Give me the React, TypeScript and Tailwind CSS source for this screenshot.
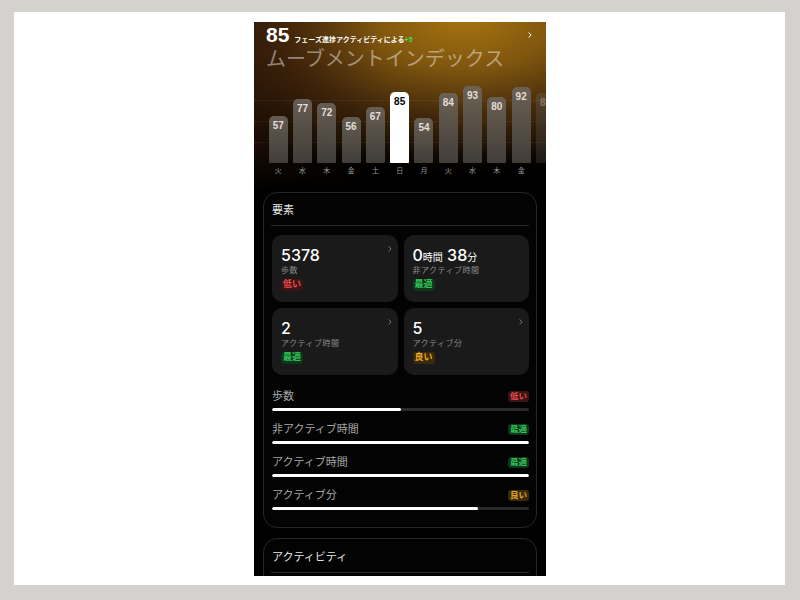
import React from "react";

const bars = [57, 77, 72, 56, 67, 85, 54, 84, 93, 80, 92, 84];
const days = ["火", "水", "木", "金", "土", "日", "月", "火", "水", "木", "金", ""];

type BadgeKind = "low" | "best" | "good";

function Badge({ kind, small }: { kind: BadgeKind; small?: boolean }) {
  const text = kind === "low" ? "低い" : kind === "best" ? "最適" : "良い";
  const cls =
    kind === "low"
      ? "bg-[#3b1515] text-[#e5484d]"
      : kind === "best"
      ? "bg-[#0e3619] text-[#32c45a]"
      : "bg-[#3a2a0a] text-[#e3a526]";
  return (
    <span
      className={`inline-flex items-center justify-center rounded-[3px] font-bold ${cls} ${
        small ? "h-[11px] px-[2px] text-[8.5px]" : "h-[12px] px-[2px] text-[9px]"
      }`}
    >
      {text}
    </span>
  );
}

function Chevron({ className }: { className?: string }) {
  return (
    <svg viewBox="0 0 6 10" className={className} fill="none" stroke="currentColor" strokeWidth="1.6" strokeLinecap="round" strokeLinejoin="round">
      <path d="M1.2 1.2 L4.8 5 L1.2 8.8" />
    </svg>
  );
}

function Tile({
  value,
  label,
  kind,
  chevron,
}: {
  value: React.ReactNode;
  label: string;
  kind: BadgeKind;
  chevron?: boolean;
}) {
  return (
    <div className="relative h-[67px] rounded-[10px] bg-[#1a1a1a] pl-[9px] pt-[10px]">
      {chevron && <Chevron className="absolute right-[6px] top-[11px] h-[6px] w-[4px] text-[#7a7a7a]" />}
      <div
        className="h-[20px] text-[16px] font-medium leading-[20px] text-white"
        style={{ fontFamily: 'Inter, "Noto Sans CJK JP", sans-serif' }}
      >
        {value}
      </div>
      <div className="mt-[1px] h-[10px] text-[8px] leading-[10px] tracking-[0.5px] text-[#8c8c8c]">{label}</div>
      <div className="mt-[3px] flex">
        <Badge kind={kind} />
      </div>
    </div>
  );
}

function Row({ label, kind, pct }: { label: string; kind: BadgeKind; pct: number }) {
  return (
    <div className="mb-[10px]">
      <div className="flex h-[16px] items-center justify-between">
        <span className="text-[11px] text-[#a6a6a6]">{label}</span>
        <Badge kind={kind} small />
      </div>
      <div className="mt-[4px] h-[3px] w-full overflow-hidden rounded-full bg-[#2a2a2a]">
        <div className="h-full rounded-full bg-white" style={{ width: `${pct}%` }} />
      </div>
    </div>
  );
}

export default function App() {
  return (
    <div
      className="h-[600px] w-[800px] bg-[#d4d2ce] pl-[14px] pt-[12px]"
      style={{ fontFamily: '"Liberation Sans", "Noto Sans CJK JP", sans-serif' }}
    >
      <div className="h-[573px] w-[771px] bg-white pl-[240px] pt-[10px]">
        <div className="h-[554px] w-[292px] overflow-hidden bg-black">
          {/* Header */}
          <div className="relative h-[170px] bg-[radial-gradient(ellipse_105%_90%_at_72%_0%,#a3720f_0%,#80560f_30%,#42280b_62%,#000_100%),linear-gradient(180deg,#3a1c08_0%,#000_100%)]">
            <div className="absolute inset-0 bg-[linear-gradient(90deg,rgba(55,26,8,0.5)_0%,rgba(0,0,0,0)_45%)]" />
            <div className="absolute inset-x-0 bottom-0 h-[50px] bg-[linear-gradient(180deg,rgba(0,0,0,0)_0%,#000_100%)]" />
            <div className="relative">
              <div className="flex items-baseline pl-[12px] pr-[14px] pt-[1px]">
                <span className="text-[21px] font-bold leading-[24px] text-white">85</span>
                <span className="ml-[5px] text-[7px] font-bold text-white">
                  フェーズ進捗アクティビティによる<span className="text-[#3ddc5a]">+5</span>
                </span>
                <span className="flex-1" />
                <Chevron className="h-[6px] w-[4px] self-center text-white" />
              </div>
              <div className="pl-[12px] text-[20px] leading-[24px] text-white/45">ムーブメントインデックス</div>

              {/* chart */}
              <div className="relative mt-[9px] h-[83px]">
                <div className="absolute inset-x-0 top-[20px] border-t border-dotted border-white/10" />
                <div className="absolute inset-x-0 top-[41px] border-t border-dotted border-white/10" />
                <div className="absolute inset-x-0 top-[62px] border-t border-dotted border-white/10" />
                <div className="flex h-full items-end gap-[5.3px] pl-[14.7px]">
                  {bars.map((v, i) => {
                    const active = i === 5;
                    return (
                      <div
                        key={i}
                        className={`relative w-[19px] shrink-0 rounded-t-[5px] rounded-b-[1px] ${
                          active
                            ? "bg-white"
                            : "bg-[linear-gradient(180deg,rgba(110,104,96,0.85)_0%,rgba(75,71,66,0.85)_100%)]"
                        } ${i === 11 ? "opacity-40" : ""}`}
                        style={{ height: `${Math.round(v * 0.83)}px` }}
                      >
                        <div
                          className={`pt-[4px] text-center text-[10px] font-bold leading-[12px] ${
                            active ? "text-black" : "text-[#e2ded9]"
                          }`}
                        >
                          {v}
                        </div>
                      </div>
                    );
                  })}
                </div>
              </div>
              <div className="mt-[3px] flex gap-[5.3px] pl-[14.7px]">
                {days.map((d, i) => (
                  <div key={i} className="h-[10px] w-[19px] shrink-0 text-center text-[7px] leading-[10px] text-[#9a9a9a]">
                    {d}
                  </div>
                ))}
              </div>
            </div>
          </div>

          {/* Card 1 */}
          <div className="mx-[9px] rounded-[14px] border border-[#262626] bg-[#030303] px-[7px] pb-[7px] pt-[10px]">
            <div className="pl-[1px] text-[11px] leading-[14px] text-[#e8e8e8]">要素</div>
            <div className="mt-[8px] h-px bg-[#2a2a2a]" />
            <div className="mt-[9px] grid grid-cols-2 gap-[6px] pl-[1px]">
              <Tile value="5378" label="歩数" kind="low" chevron />
              <Tile
                value={
                  <span>
                    0<span className="text-[10px] font-normal">時間</span> 38<span className="text-[10px] font-normal">分</span>
                  </span>
                }
                label="非アクティブ時間"
                kind="best"
              />
              <Tile value="2" label="アクティブ時間" kind="best" chevron />
              <Tile value="5" label="アクティブ分" kind="good" chevron />
            </div>
            <div className="mt-[13px] pl-[1px]">
              <Row label="歩数" kind="low" pct={50} />
              <Row label="非アクティブ時間" kind="best" pct={100} />
              <Row label="アクティブ時間" kind="best" pct={100} />
              <Row label="アクティブ分" kind="good" pct={80} />
            </div>
          </div>

          {/* Card 2 */}
          <div className="mx-[9px] mt-[10px] rounded-[14px] border border-[#262626] bg-[#030303] px-[7px] pb-[40px] pt-[11px]">
            <div className="pl-[1px] text-[11px] leading-[14px] text-[#e8e8e8]">アクティビティ</div>
            <div className="mt-[8px] h-px bg-[#2a2a2a]" />
          </div>
        </div>
      </div>
    </div>
  );
}
